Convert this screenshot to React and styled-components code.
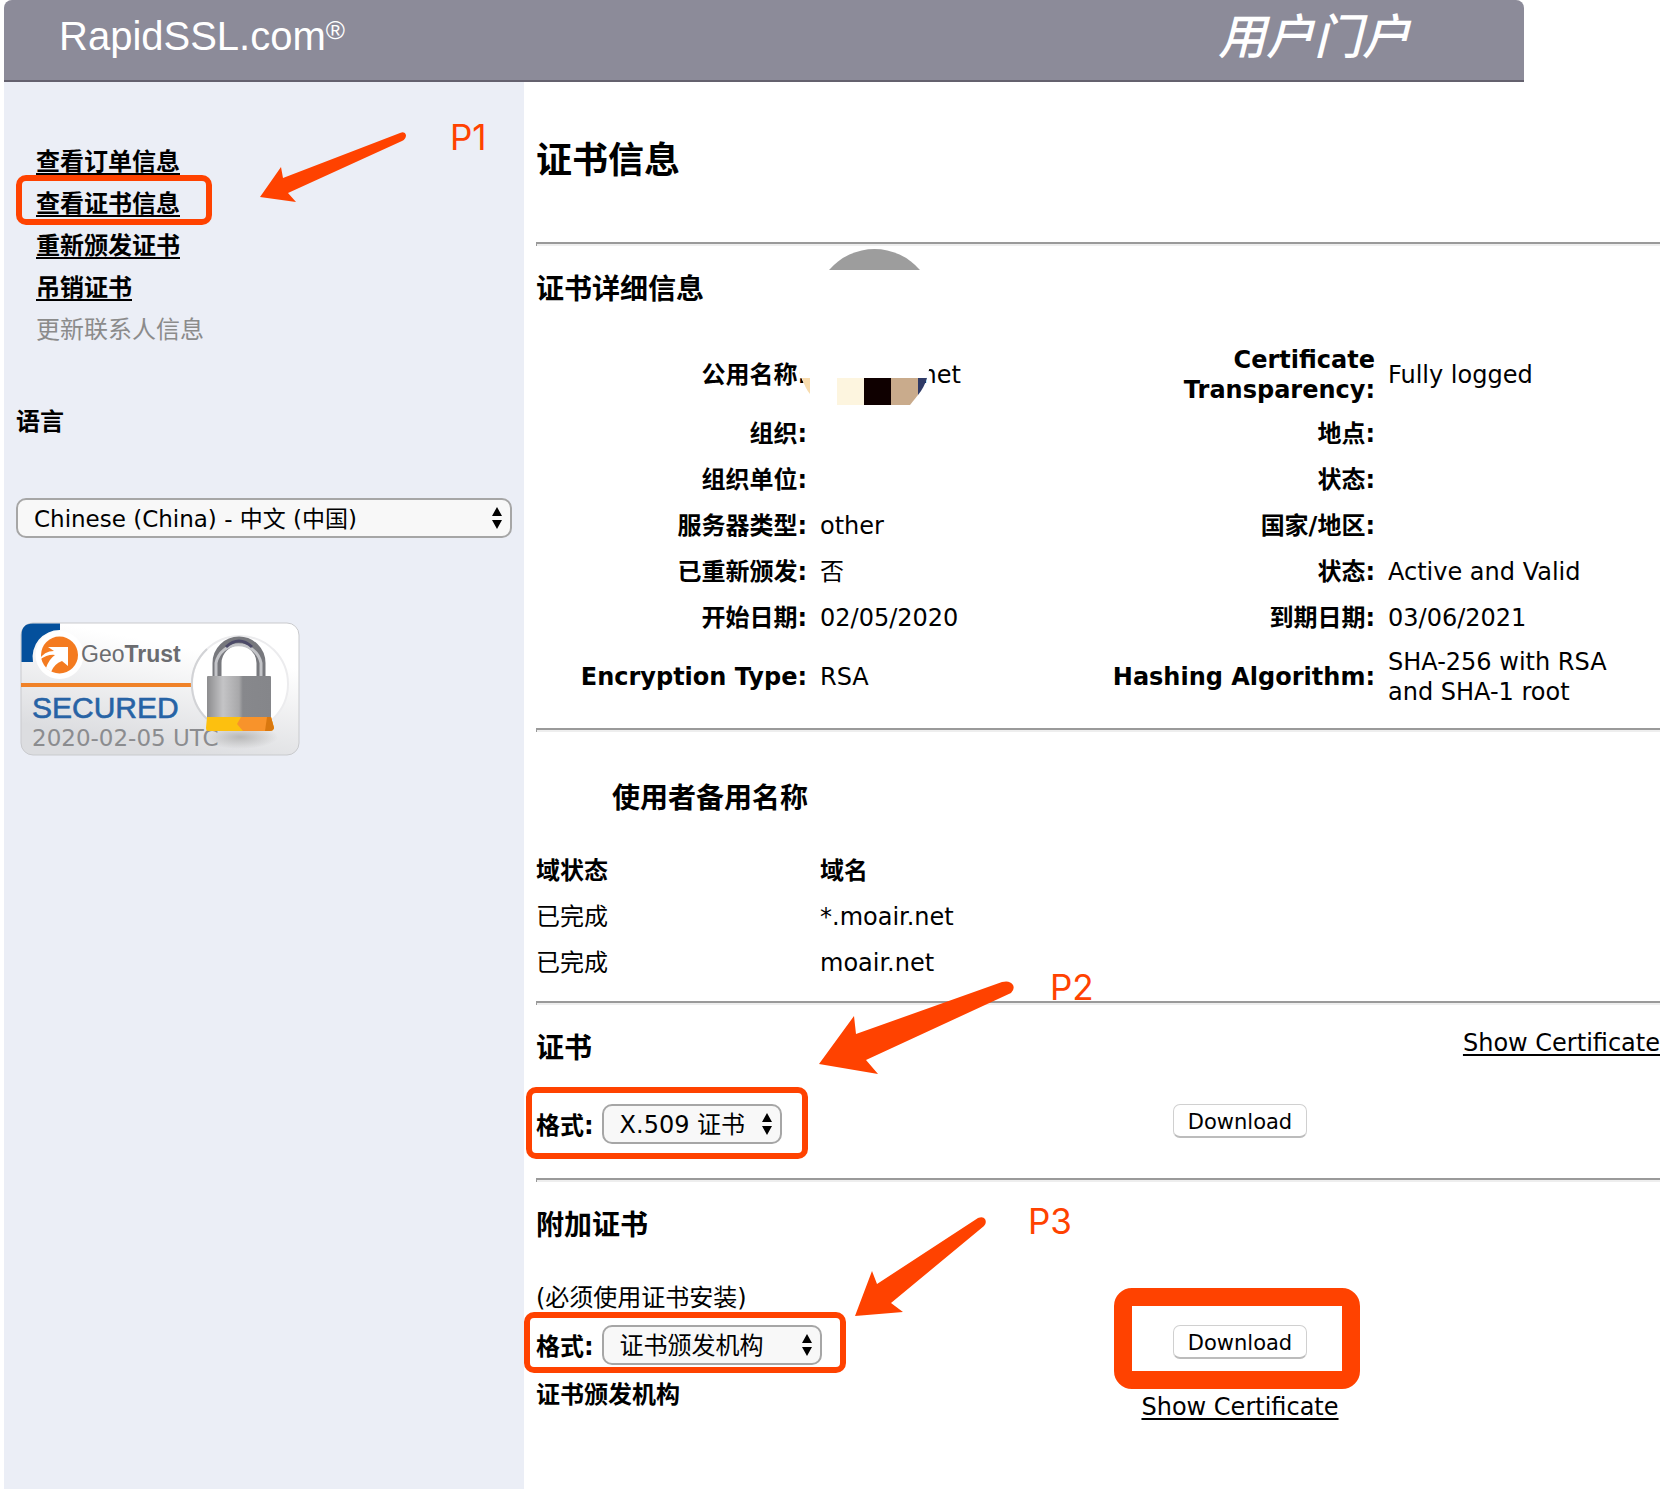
import React from "react";
import styled, { createGlobalStyle } from "styled-components";

const ACCENT = "#ff4200";
const SANS = '"DejaVu Sans", "Noto Sans CJK SC", sans-serif';

const GlobalStyle = createGlobalStyle`
  *, *::before, *::after { box-sizing: border-box; }
  body {
    margin: 0;
    background: #fff;
    color: #000;
    font: 24px/30px ${SANS};
  }
`;

const Page = styled.div`
  position: relative;
  padding: 0 0 12px 4px;
`;

const Header = styled.header`
  display: flex;
  justify-content: space-between;
  max-width: 1520px;
  height: 82px;
  padding: 13px 114px 0 55px;
  background: #8c8b99;
  border-bottom: 2px solid #64616e;
  border-radius: 8px 8px 0 0;
  color: #fff;
`;

const Brand = styled.div`
  font: 40px/46px "Liberation Sans", Arial, sans-serif;

  sup {
    font-size: 26px;
    line-height: 0;
    vertical-align: 11px;
  }
`;

const PortalName = styled.div`
  font: italic 500 48px/40px "Noto Sans CJK SC", sans-serif;
`;

const Body = styled.div`
  display: flex;
`;

const Sidebar = styled.aside`
  flex: 0 0 520px;
  padding: 59px 12px 0;
  background: #ebeef6;
`;

const NavList = styled.ul`
  list-style: none;
  margin: 0 0 50px;
  padding: 0 0 0 20px;
`;

const NavItem = styled.li`
  position: relative;
  width: max-content;
  line-height: 42px;
  color: #8b8b8b;
`;

const Link = styled.a`
  color: #000;
  font-weight: ${(p) => (p.$bold ? 700 : 400)};
  text-decoration: underline;
  text-decoration-thickness: 2px;
  text-underline-offset: 3px;
  text-decoration-skip-ink: none;
`;

const LanguageLabel = styled.label`
  display: block;
  margin-bottom: 55px;
  line-height: 42px;
  font-weight: 700;
`;

const SelectBox = styled.span`
  position: relative;
  display: ${(p) => (p.$fill ? "block" : "inline-block")};
  width: ${(p) => p.$width || "100%"};

  svg {
    position: absolute;
    top: 8px;
    right: 9px;
    pointer-events: none;
  }
`;

const Select = styled.select`
  display: block;
  appearance: none;
  width: 100%;
  height: 40px;
  margin: 0;
  padding: 2px 24px 0 16px;
  border: 2px solid #a6a6a6;
  border-radius: 10px;
  background: #f8f8f8;
  color: #000;
  font: ${(p) => p.$size}px/32px ${SANS};
`;

const Seal = styled.svg`
  display: block;
  margin: 84px 0 0 4px;
`;

const Main = styled.main`
  flex: 1;
  min-width: 0;
  padding: 55px 16px 70px 12px;
`;

const Title = styled.h1`
  margin: 0 0 57px;
  font-size: 36px;
  line-height: 48px;
`;

const Rule = styled.hr`
  height: 4px;
  margin: 0 0 26px;
  border: 0;
  border-top: 2px solid #9a9a9a;
  border-left: 1px solid #9a9a9a;
  background: #eee;
`;

const SectionTitle = styled.h2`
  width: ${(p) => (p.$narrow ? "272px" : "auto")};
  margin: ${(p) => (p.$narrow ? "49px 0 31px" : "0")};
  font-size: 28px;
  line-height: 36px;
  text-align: ${(p) => (p.$narrow ? "right" : "left")};
`;

const DataTable = styled.table`
  width: 100%;
  margin: ${(p) => (p.$spaced ? "31px 0 15px" : "0 0 15px")};
  border-collapse: collapse;
  table-layout: fixed;
`;

const Col = styled.col`
  width: ${(p) => (p.$auto ? "auto" : "278px")};
`;

const Row = styled.tr`
  height: 46px;
`;

const Label = styled.th`
  padding: 6px 7px 6px 0;
  font-weight: 700;
  text-align: ${(p) => (p.$left ? "left" : "right")};

  & + & {
    padding-left: 6px;
  }
`;

const Value = styled.td`
  padding: 6px 24px 6px ${(p) => (p.$first ? 0 : 6)}px;
`;

const Redacted = styled.span`
  position: relative;
  display: block;
  width: 141px;
  text-align: right;

  svg {
    position: absolute;
    left: -30px;
    top: -112px;
  }
`;

const SplitRow = styled.div`
  display: flex;
  justify-content: space-between;
  align-items: flex-start;
  line-height: 24px;
`;

const Columns = styled.div`
  display: grid;
  grid-template-columns: repeat(4, 1fr);
  column-gap: 4px;
  align-items: start;
  margin: ${(p) => p.$margin};
`;

const FormatColumn = styled.div`
  grid-column: span 2;
`;

const ActionColumn = styled.div`
  display: flex;
  flex-direction: column;
  align-items: center;
  gap: 36px;
  padding-left: 2px;
  line-height: 24px;
`;

const FormatRow = styled.div`
  position: relative;
  display: flex;
  align-items: center;
  gap: 8px;
  width: max-content;

  label {
    padding-top: 3px;
    font-weight: 700;
  }
`;

const Issuer = styled.div`
  margin-top: 15px;
  font-weight: 700;
`;

const Note = styled.div`
  margin: 39px 0 0;
`;

const ButtonWrap = styled.div`
  position: relative;
`;

const Button = styled.button`
  display: block;
  width: 134px;
  height: 34px;
  padding: 2px 0 0;
  border: 1px solid #d0d0d0;
  border-bottom: 2px solid #bcbcbc;
  border-radius: 7px;
  background: #fff;
  color: #000;
  font: 21px/28px ${SANS};
`;

const Highlight = styled.span`
  position: absolute;
  inset: ${(p) => p.$inset};
  border: ${(p) => p.$weight || 6}px solid ${ACCENT};
  border-radius: ${(p) => (p.$weight ? 18 : 10)}px;
  pointer-events: none;
`;

const ArrowMark = styled.svg`
  position: absolute;
  left: ${(p) => p.$x}px;
  top: ${(p) => p.$y}px;
  fill: ${ACCENT};
  pointer-events: none;
`;

const StepMark = styled.span`
  position: absolute;
  left: ${(p) => p.$x}px;
  top: ${(p) => p.$y}px;
  color: ${ACCENT};
  font: 400 35px/40px Inter, Roboto, sans-serif;
`;

const NAV = [
  { text: "查看订单信息" },
  { text: "查看证书信息", marked: true },
  { text: "重新颁发证书" },
  { text: "吊销证书" },
  { text: "更新联系人信息", disabled: true },
];

const DETAILS = [
  ["公用名称:", "*.moair.net", "Certificate Transparency:", "Fully logged"],
  ["组织:", "", "地点:", ""],
  ["组织单位:", "", "状态:", ""],
  ["服务器类型:", "other", "国家/地区:", ""],
  ["已重新颁发:", "否", "状态:", "Active and Valid"],
  ["开始日期:", "02/05/2020", "到期日期:", "03/06/2021"],
  ["Encryption Type:", "RSA", "Hashing Algorithm:", "SHA-256 with RSA and SHA-1 root"],
];

const DOMAINS = [
  ["已完成", "*.moair.net"],
  ["已完成", "moair.net"],
];

const STEPS = [
  {
    name: "P1", x: 450, y: 117, left: 256, top: 127, w: 156, h: 80,
    d: "M4 70 25 40 27 51 144 6Q149 4 150 8Q150 12 146 14L32 66 40 75Z",
  },
  {
    name: "P2", x: 1050, y: 967, left: 814, top: 975, w: 204, h: 104,
    d: "M5 89 40 41 42 59 188 7Q196 5 199 10Q201 14 197 18L52 85 64 99Z",
  },
  {
    name: "P3", x: 1028, y: 1201, left: 850, top: 1212, w: 140, h: 108,
    d: "M5 104 22 59 27 72 128 6Q133 4 135 7Q137 11 134 14L41 91 53 100Z",
  },
];

function Dropdown({ id, value, width, fill, size = 24 }) {
  return (
    <SelectBox $width={width} $fill={fill}>
      <Select id={id} $size={size} defaultValue={value}>
        <option>{value}</option>
      </Select>
      <svg width="12" height="24" viewBox="0 0 12 24" aria-hidden="true">
        <path d="M6 1 11 10H1Z M6 23 1 14H11Z" />
      </svg>
    </SelectBox>
  );
}

function SiteSeal() {
  return (
    <Seal width="280" height="134" viewBox="0 0 280 134" role="img" aria-label="GeoTrust Secured">
      <defs>
        <linearGradient id="card" x1="1" y1="0" x2="0.6" y2="1">
          <stop offset="0.3" stopColor="#fff" />
          <stop offset="1" stopColor="#dcdde0" />
        </linearGradient>
        <linearGradient id="steel">
          <stop offset="0" stopColor="#8c8c8e" />
          <stop offset="0.25" stopColor="#c4c4c6" />
          <stop offset="0.5" stopColor="#a8a8aa" />
          <stop offset="0.56" stopColor="#87888c" />
          <stop offset="1" stopColor="#85868a" />
        </linearGradient>
        <radialGradient id="shade">
          <stop offset="0" stopColor="#b8b8b8" />
          <stop offset="1" stopColor="#b8b8b8" stopOpacity="0" />
        </radialGradient>
      </defs>
      <rect x="1" y="1" width="278" height="132" rx="12" fill="url(#card)" stroke="#c9cacd" />
      <path d="M1.500 40V13Q1.500 1.500 13 1.500H40V8A27 27 0 0 0 13 40Z" fill="#04509c" />
      <circle cx="39.500" cy="33" r="24" fill="#fff" />
      <circle cx="39.500" cy="33" r="18.500" fill="#f47b20" />
      <path d="M28 25H48V44L42 39Q34 42 31 50L26 46Q29 37 35 33Q28 32 19 38Q24 29 34 29Z" fill="#fff" />
      <path d="M1 61H174V65H1Z" fill="#f08228" />
      <circle cx="220" cy="62" r="48" fill="#fff" stroke="#ececee" strokeWidth="2" />
      <path d="M187 27A48 48 0 0 0 187 97" fill="none" stroke="#d2d3d6" strokeWidth="2" />
      <ellipse cx="220" cy="115" rx="38" ry="12" fill="url(#shade)" />
      <text x="61" y="40" fontFamily="Liberation Sans, Arial, sans-serif" fontSize="23" fill="#6b6c70">
        Geo<tspan fontWeight="700">Trust</tspan>
      </text>
      <text x="12" y="96" fontFamily="Liberation Sans, Arial, sans-serif" fontSize="30" fill="#2763a5" stroke="#2763a5" strokeWidth="0.600">
        SECURED
      </text>
      <text x="12" y="124" fontFamily="DejaVu Sans, sans-serif" fontSize="23" fill="#8b8c8f">
        2020-02-05 UTC
      </text>
      <path d="M197 56V41A22 22 0 0 1 241 41V56" fill="none" stroke="#77787d" strokeWidth="9" />
      <path d="M196 56V41A23 23 0 0 1 241 41V56" fill="none" stroke="#c3c4c8" strokeWidth="3" />
      <path d="M206 25Q219 13 232 25" fill="none" stroke="#4c4a68" strokeWidth="3" />
      <rect x="187" y="54" width="64" height="42" rx="1" fill="url(#steel)" />
      <path d="M187 95H251L254 106Q253 109 250 109H188Q186 109 186 106Z" fill="#fdc00f" />
      <path d="M221 95H251L254 106Q253 109 250 109H223L217 102Z" fill="#f8932b" />
      <path d="M247 95H251L254 106Q253 109 250 109H245Z" fill="#d9780f" />
    </Seal>
  );
}

function RedactedName({ children }) {
  return (
    <Redacted>
      {children}
      <svg width="145" height="174" viewBox="790 248 145 174" aria-hidden="true">
        <path d="M829 270A60 60 0 0 1 920 270Z" fill="#9d9d9d" />
        <clipPath id="veil"><rect x="790" y="330" width="145" height="80" /></clipPath>
        <circle cx="864" cy="354" r="67" fill="#fff" clipPath="url(#veil)" />
        <path d="M802 378H810V394Q805 388 802 378Z" fill="#f8dcae" />
        <path d="M837 378H864V405H837Z" fill="#fdf5df" />
        <path d="M864 378H891V405H864Z" fill="#0f0000" />
        <path d="M891 378H918V395L910 405H891Z" fill="#c9ab8c" />
        <path d="M918 378H927Q924 388 918 395Z" fill="#2f3a66" />
      </svg>
    </Redacted>
  );
}

export default function App() {
  return (
    <>
      <GlobalStyle />
      <Page>
        <Header>
          <Brand>RapidSSL.com<sup>®</sup></Brand>
          <PortalName>用户门户</PortalName>
        </Header>
        <Body>
          <Sidebar>
            <nav>
              <NavList>
                {NAV.map((item) => (
                  <NavItem key={item.text}>
                    {item.disabled ? item.text : <Link $bold href="#">{item.text}</Link>}
                    {item.marked && <Highlight $inset="-8px -32px 0 -20px" />}
                  </NavItem>
                ))}
              </NavList>
            </nav>
            <LanguageLabel htmlFor="language">语言</LanguageLabel>
            <Dropdown id="language" value="Chinese (China) - 中文 (中国)" size={23} fill width="496px" />
            <SiteSeal />
          </Sidebar>
          <Main>
            <Title>证书信息</Title>
            <Rule />
            <SectionTitle>证书详细信息</SectionTitle>
            <DataTable $spaced>
              <colgroup>
                <Col /><Col $auto /><Col /><Col />
              </colgroup>
              <tbody>
                {DETAILS.map(([l1, v1, l2, v2], i) => (
                  <Row key={l1}>
                    <Label scope="row">{l1}</Label>
                    <Value>{i === 0 ? <RedactedName>{v1}</RedactedName> : v1}</Value>
                    <Label scope="row">{l2}</Label>
                    <Value>{v2}</Value>
                  </Row>
                ))}
              </tbody>
            </DataTable>
            <Rule />
            <SectionTitle $narrow>使用者备用名称</SectionTitle>
            <DataTable>
              <colgroup>
                <Col /><Col $auto />
              </colgroup>
              <thead>
                <Row>
                  <Label $left scope="col">域状态</Label>
                  <Label $left scope="col">域名</Label>
                </Row>
              </thead>
              <tbody>
                {DOMAINS.map(([status, name]) => (
                  <Row key={name}>
                    <Value $first>{status}</Value>
                    <Value>{name}</Value>
                  </Row>
                ))}
              </tbody>
            </DataTable>
            <Rule />
            <SplitRow>
              <SectionTitle>证书</SectionTitle>
              <Link href="#">Show Certificate</Link>
            </SplitRow>
            <Columns $margin="37px 0 34px">
              <FormatColumn>
                <FormatRow>
                  <label htmlFor="format">格式:</label>
                  <Dropdown id="format" value="X.509 证书" width="180px" />
                  <Highlight $inset="-17px -26px -15px -10px" />
                </FormatRow>
              </FormatColumn>
              <ActionColumn>
                <Button type="button">Download</Button>
              </ActionColumn>
            </Columns>
            <Rule />
            <SectionTitle>附加证书</SectionTitle>
            <Note>(必须使用证书安装)</Note>
            <Columns $margin="12px 0 0">
              <FormatColumn>
                <FormatRow>
                  <label htmlFor="chain-format">格式:</label>
                  <Dropdown id="chain-format" value="证书颁发机构" width="220px" />
                  <Highlight $inset="-13px -24px -8px -12px" />
                </FormatRow>
                <Issuer>证书颁发机构</Issuer>
              </FormatColumn>
              <ActionColumn>
                <ButtonWrap>
                  <Button type="button">Download</Button>
                  <Highlight $weight={18} $inset="-37px -53px -30px -59px" />
                </ButtonWrap>
                <Link href="#">Show Certificate</Link>
              </ActionColumn>
            </Columns>
          </Main>
        </Body>
        {STEPS.map((s) => (
          <React.Fragment key={s.name}>
            <StepMark $x={s.x} $y={s.y}>{s.name}</StepMark>
            <ArrowMark $x={s.left} $y={s.top} width={s.w} height={s.h} viewBox={`0 0 ${s.w} ${s.h}`} aria-hidden="true">
              <path d={s.d} />
            </ArrowMark>
          </React.Fragment>
        ))}
      </Page>
    </>
  );
}
